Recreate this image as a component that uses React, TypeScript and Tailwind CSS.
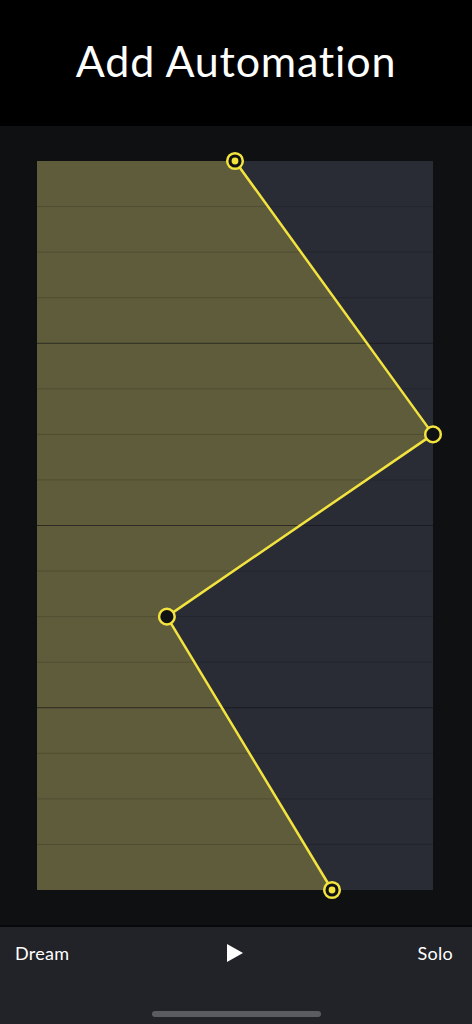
import React from 'react';

const W = 396;
const H = 729;
const ROWS = 16;

// automation points as fractions of the lane
const points = [
  { x: 0.5, y: 0, end: true },
  { x: 1, y: 6 / 16, end: false },
  { x: 0.328, y: 10 / 16, end: false },
  { x: 0.745, y: 1, end: true },
];

const AutomationLane: React.FC = () => {
  const pts = points.map(p => ({ ...p, px: p.x * W, py: p.y * H }));
  const line = pts.map(p => `${p.px},${p.py}`).join(' ');
  const fill = `0,0 ${line} 0,${H}`;

  return (
    <div className="relative w-[396px] h-[729px] bg-[#292c35]">
      <svg width={W} height={H} className="absolute inset-0 overflow-visible">
        <polygon points={fill} fill="#5f5c3b" />
        {Array.from({ length: ROWS - 1 }).map((_, i) => {
          const y = ((i + 1) * H) / ROWS;
          const major = (i + 1) % 4 === 0;
          return (
            <line
              key={i}
              x1={0}
              x2={W}
              y1={y}
              y2={y}
              stroke={major ? '#15161a' : '#000000'}
              strokeOpacity={major ? 0.7 : 0.16}
              strokeWidth={1}
            />
          );
        })}
        <polyline points={line} fill="none" stroke="#f3e33f" strokeWidth={2.5} strokeLinejoin="round" />
        {pts.map((p, i) => (
          <g key={i}>
            <circle cx={p.px} cy={p.py} r={7.8} fill="#101112" stroke="#f3e33f" strokeWidth={2.5} />
            {p.end && <circle cx={p.px} cy={p.py} r={3.4} fill="#f3e33f" />}
          </g>
        ))}
      </svg>
    </div>
  );
};

export default function App() {
  return (
    <div
      className="w-[472px] h-[1024px] flex flex-col bg-black text-white overflow-hidden"
      style={{ fontFamily: 'Lato, "Open Sans", sans-serif' }}
    >
      <header className="h-[126px] flex items-center justify-center bg-black pb-[6px]">
        <h1 className="text-[43px] font-normal tracking-[0.8px] leading-none">Add Automation</h1>
      </header>

      <main className="h-[801px] bg-[#0f1011] pl-[37px] pt-[35px] border-b-2 border-[#08090a]">
        <AutomationLane />
      </main>

      <footer className="flex-1 bg-[#222328] flex flex-col">
        <div className="h-[52px] grid grid-cols-3 items-center pl-[15px] pr-[19px] text-[18px] tracking-[0.3px]">
          <span>Dream</span>
          <div className="flex justify-center pl-[2px]">
            <svg width="18" height="20" viewBox="0 0 18 20">
              <path d="M1 1 L17 10 L1 19 Z" fill="#ffffff" />
            </svg>
          </div>
          <span className="text-right">Solo</span>
        </div>
        <div className="flex-1 flex items-end justify-center pb-[7px]">
          <div className="w-[169px] h-[6px] rounded-full bg-[#5b5c61]" />
        </div>
      </footer>
    </div>
  );
}
